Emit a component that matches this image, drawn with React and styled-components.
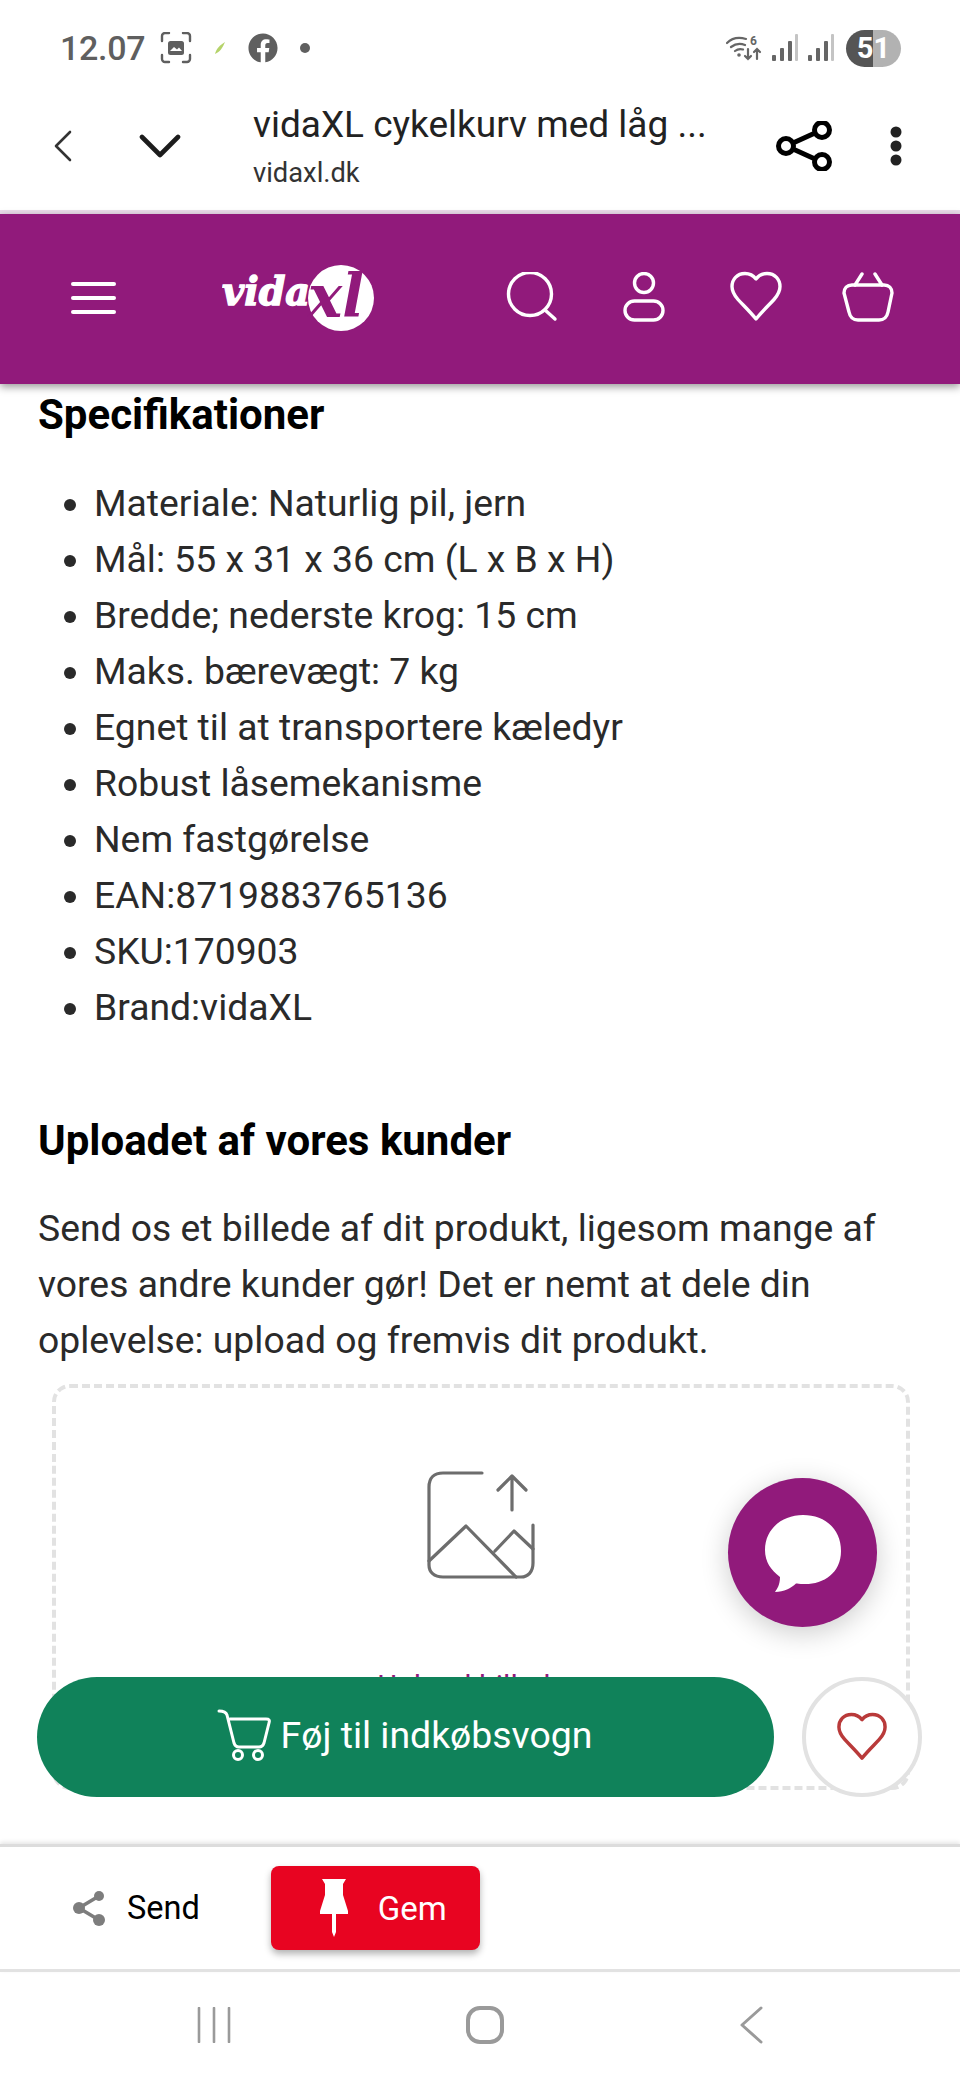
import React from 'react';
import styled, { createGlobalStyle } from 'styled-components';
import { FaFacebook } from 'react-icons/fa';

const specs = [
  'Materiale: Naturlig pil, jern',
  'Mål: 55 x 31 x 36 cm (L x B x H)',
  'Bredde; nederste krog: 15 cm',
  'Maks. bærevægt: 7 kg',
  'Egnet til at transportere kæledyr',
  'Robust låsemekanisme',
  'Nem fastgørelse',
  'EAN:8719883765136',
  'SKU:170903',
  'Brand:vidaXL',
];

const Global = createGlobalStyle`
  html, body { margin: 0; padding: 0; background: #fff; }
  body { font-family: Roboto, "Liberation Sans", sans-serif; }
  * { box-sizing: border-box; }
`;

const Page = styled.div`
  width: 960px;
  height: 2080px;
  display: flex;
  flex-direction: column;
  overflow: hidden;
  background: #fff;
`;

/* status bar */
const StatusBar = styled.div`
  height: 72px;
  flex: none;
  display: flex;
  align-items: center;
  padding: 24px 59px 0 60px;
  color: #5f5f5f;
`;
const Clock = styled.span`
  font-size: 34px;
  font-weight: 500;
  width: 100px;
  letter-spacing: -0.3px;
`;
const StatusLeft = styled.div`
  display: flex;
  align-items: center;
  gap: 22px;
`;
const StatusRight = styled.div`
  margin-left: auto;
  display: flex;
  align-items: center;
  gap: 10px;
`;
const Battery = styled.div`
  width: 55px;
  height: 37px;
  margin-left: 2px;
  border-radius: 19px;
  background: linear-gradient(90deg, #555 0 49%, #b2b2b2 49% 100%);
  color: #fff;
  font-size: 29px;
  font-weight: 700;
  line-height: 37px;
  text-align: center;
`;

/* browser bar */
const BrowserBar = styled.div`
  height: 142px;
  flex: none;
  display: flex;
  align-items: center;
  padding: 0 58px 0 54px;
  border-bottom: 4px solid #eadcea;
`;
const NavChevrons = styled.div`
  display: flex;
  align-items: center;
  gap: 67px;
  width: 199px;
  margin-top: 10px;
`;
const TitleBlock = styled.div`
  flex: 1;
  margin-top: 12px;
`;
const PageTitle = styled.div`
  font-size: 37px;
  line-height: 44px;
  color: #222;
`;
const PageUrl = styled.div`
  font-size: 27.300px;
  line-height: 36px;
  margin-top: 8px;
  color: #333;
`;
const BarActions = styled.div`
  display: flex;
  align-items: center;
  gap: 58px;
  margin-top: 10px;
`;

/* shop header */
const Header = styled.header`
  height: 170px;
  flex: none;
  position: relative;
  z-index: 2;
  display: flex;
  align-items: center;
  padding: 0 66px 0 71px;
  background: #911a7b;
  box-shadow: 0 3px 8px rgba(0, 0, 0, 0.4);
`;
const Burger = styled.div`
  width: 45px;
  display: flex;
  flex-direction: column;
  gap: 10px;
  margin-top: -3px;
`;
const BurgerLine = styled.span`
  display: block;
  height: 4px;
  border-radius: 2px;
  background: #fff;
`;
const LogoBox = styled.div`
  margin-left: 106px;
  margin-top: -4px;
  line-height: 0;
`;
const HeaderIcons = styled.div`
  margin-left: auto;
  display: flex;
  align-items: center;
  gap: 60px;
  margin-top: -4px;
`;

/* page content */
const Content = styled.main`
  flex: 1;
  position: relative;
  overflow: hidden;
  padding: 9px 38px 0;
`;
const Heading = styled.h2`
  margin: ${(p) => p.$top || 0}px 0 0;
  font-size: 42px;
  line-height: 44px;
  font-weight: 700;
  color: #000;
`;
const SpecList = styled.ul`
  margin: 38px 0 0;
  padding: 0 0 0 56px;
`;
const SpecItem = styled.li`
  font-size: 37.300px;
  line-height: 56px;
  color: #2a2a2a;
`;
const Intro = styled.p`
  margin: 37px 0 0;
  font-size: 37.300px;
  line-height: 56px;
  color: #2a2a2a;
  white-space: nowrap;
`;
const DropZone = styled.div`
  height: 406px;
  margin: 16px 12px 0 14px;
  padding-top: 83px;
  display: flex;
  flex-direction: column;
  align-items: center;
  border: 4px dashed #e2e2e2;
  border-radius: 18px;
`;
const DropLabel = styled.div`
  margin-top: 90px;
  margin-right: 18px;
  font-size: 30px;
  line-height: 34px;
  color: #911a7b;
`;
const ChatBubble = styled.div`
  position: absolute;
  right: 83px;
  bottom: 217px;
  width: 149px;
  height: 149px;
  display: flex;
  align-items: center;
  justify-content: center;
  border-radius: 50%;
  background: #911a7b;
  box-shadow: 0 6px 28px rgba(0, 0, 0, 0.2);
`;
const BuyBar = styled.div`
  position: absolute;
  left: 37px;
  right: 38px;
  bottom: 47px;
  display: flex;
  align-items: center;
  justify-content: space-between;
`;
const AddButton = styled.div`
  width: 737px;
  height: 120px;
  display: flex;
  align-items: center;
  justify-content: center;
  gap: 10px;
  padding: 0 2px 4px 0;
  border-radius: 60px;
  background: #10825a;
  color: #fff;
  font-size: 37.400px;
`;
const WishButton = styled.div`
  width: 120px;
  height: 120px;
  display: flex;
  align-items: center;
  justify-content: center;
  border-radius: 50%;
  background: #fff;
  border: 4px solid #e2e2e2;
`;

/* pinterest bar */
const ShareBar = styled.div`
  height: 128px;
  flex: none;
  position: relative;
  display: flex;
  align-items: center;
  padding: 0 0 0 72px;
  background: #fff;
  border-top: 3px solid #dcdcdc;
  border-bottom: 3px solid #e2e2e2;
  box-shadow: 0 -2px 4px rgba(0, 0, 0, 0.1);
`;
const SendLink = styled.div`
  display: flex;
  align-items: center;
  gap: 21px;
  font-size: 32.500px;
  color: #000;
`;
const PinButton = styled.div`
  width: 209px;
  height: 84px;
  margin-left: 71px;
  display: flex;
  align-items: center;
  padding-left: 49px;
  gap: 30px;
  border-radius: 8px;
  background: #e80421;
  color: #fff;
  font-size: 33px;
  box-shadow: 0 4px 7px rgba(0, 0, 0, 0.3);
`;

/* android nav */
const SystemNav = styled.nav`
  height: 110px;
  flex: none;
  display: flex;
  align-items: center;
  padding: 0 197px 0 197px;
  justify-content: space-between;
  margin-top: -2px;
`;

function ScreenshotIcon() {
  return (
    <svg width="32" height="32" viewBox="0 0 32 32" fill="none" stroke="#5f5f5f" strokeWidth="2.4" strokeLinecap="round">
      <path d="M2 9V4a3 3 0 0 1 3-3h4M23 1h4a3 3 0 0 1 3 3v5M30 23v4a3 3 0 0 1-3 3h-4M9 30H5a3 3 0 0 1-3-3v-4" />
      <rect x="8" y="9" width="16" height="14" rx="2.5" fill="#5f5f5f" stroke="none" />
      <path d="M10 19l4-4 3 2.5 2-2 3 3.5z" fill="#fff" stroke="none" />
    </svg>
  );
}

function LeafIcon() {
  return (
    <svg width="12" height="14" viewBox="0 0 12 14">
      <path d="M1 13C2 8 6 4 11 1 9 6 6 11 1 13z" fill="#b5d36a" />
    </svg>
  );
}

function WifiIcon() {
  return (
    <svg width="36" height="26" viewBox="0 0 36 26" fill="none" stroke="#666" strokeWidth="2.2" strokeLinecap="round">
      <path d="M1 8C6 3 13 2 20 4M5 12c4-3 9-4 14-2M9 16c2.500-2 5-2.500 8-1.500" />
      <circle cx="13" cy="20" r="1.800" fill="#666" stroke="none" />
      <path d="M22 14v10M19 21l3 3 3-3M31 24V14M28 17l3-3 3 3" />
      <text x="24" y="10" fontSize="12" fontWeight="700" fill="#666" stroke="none" fontFamily="Roboto, sans-serif">6</text>
    </svg>
  );
}

function SignalIcon() {
  return (
    <svg width="26" height="28" viewBox="0 0 26 28">
      <rect x="0" y="21" width="4" height="6" rx="1" fill="#666" />
      <rect x="8" y="14" width="4" height="13" rx="1" fill="#666" />
      <rect x="16" y="7" width="4" height="20" rx="1" fill="#666" />
      <rect x="23" y="0" width="3" height="27" rx="1" fill="#c4c4c4" />
    </svg>
  );
}

function BackThin() {
  return (
    <svg width="18" height="32" viewBox="0 0 18 32" fill="none" stroke="#333" strokeWidth="2.6" strokeLinecap="round" strokeLinejoin="round">
      <path d="M16 2L2 16l14 14" />
    </svg>
  );
}

function DownChevron() {
  return (
    <svg width="42" height="24" viewBox="0 0 42 24" fill="none" stroke="#1c1c1c" strokeWidth="4.600" strokeLinecap="round" strokeLinejoin="round">
      <path d="M3 3l18 18L39 3" />
    </svg>
  );
}

function ShareOutline() {
  return (
    <svg width="56" height="50" viewBox="0 0 56 50" fill="none" stroke="#000" strokeWidth="5">
      <circle cx="10" cy="25" r="7.500" />
      <circle cx="46" cy="9" r="7.500" />
      <circle cx="46" cy="41" r="7.500" />
      <path d="M17 22l22-10M17 28l22 10" />
    </svg>
  );
}

function DotsIcon() {
  return (
    <svg width="12" height="40" viewBox="0 0 12 40" fill="#222">
      <circle cx="6" cy="6" r="5.500" />
      <circle cx="6" cy="20" r="5.500" />
      <circle cx="6" cy="34" r="5.500" />
    </svg>
  );
}

function VidaLogo() {
  return (
    <svg width="152" height="72" viewBox="0 0 152 72">
      <circle cx="119" cy="37" r="33" fill="#fff" />
      <text x="0" y="44" fontFamily="'DejaVu Serif', serif" fontStyle="italic" fontWeight="700" fontSize="40" fill="#fff" stroke="#fff" strokeWidth="1.4" textLength="88" lengthAdjust="spacingAndGlyphs">vida</text>
      <text x="86" y="56" fontFamily="'DejaVu Serif', serif" fontStyle="italic" fontWeight="700" fontSize="60" fill="#911a7b" textLength="56" lengthAdjust="spacingAndGlyphs">xl</text>
    </svg>
  );
}

function SearchIcon() {
  return (
    <svg width="52" height="50" viewBox="0 0 52 50" fill="none" stroke="#fff" strokeWidth="3.400" strokeLinecap="round">
      <circle cx="24" cy="22" r="21.500" />
      <path d="M39 38l10 9" />
    </svg>
  );
}

function UserIcon() {
  return (
    <svg width="52" height="50" viewBox="0 0 52 50" fill="none" stroke="#fff" strokeWidth="3.400">
      <circle cx="26" cy="11" r="9.500" />
      <rect x="7" y="29" width="38" height="19" rx="9.500" />
    </svg>
  );
}

function HeartIcon({ size = 52, color = '#fff', weight = 3.4 }) {
  return (
    <svg width={size} height={size} viewBox="0 0 52 50" fill="none" stroke={color} strokeWidth={weight} strokeLinejoin="round">
      <path d="M26 7c-3-4-7-5.500-11-5.500C7 1.500 2 7.500 2 14.500c0 5 2.500 9 6 13 5 5.500 11 11 18 19.500 7-8.500 13-14 18-19.500 3.500-4 6-8 6-13 0-7-5-13-13-13-4 0-8 1.500-11 5.500z" />
    </svg>
  );
}

function BasketIcon() {
  return (
    <svg width="52" height="50" viewBox="0 0 52 50" fill="none" stroke="#fff" strokeWidth="3.400" strokeLinecap="round" strokeLinejoin="round">
      <path d="M20 2l-7 11M33 2l7 11" />
      <path d="M10 13h32c5 0 8 3 8 8l-4 19c-1 5-4 8-9 8H16c-5 0-8-3-9-8L2 21c0-5 3-8 8-8z" />
    </svg>
  );
}

function UploadIcon() {
  return (
    <svg width="108" height="108" viewBox="0 0 108 108" fill="none" stroke="#6d6d6d" strokeWidth="3.200" strokeLinecap="round" strokeLinejoin="round">
      <path d="M55 2H16C7 2 2 7 2 16v78c0 7 5 12 14 12h78c7 0 12-5 12-14V54" />
      <path d="M2 90l37-35 50 51M68 80l19-20 19 18" />
      <path d="M85 39V6M71 19L85 5l14 14" />
    </svg>
  );
}

function ChatIcon() {
  return (
    <svg width="78" height="78" viewBox="0 0 78 78">
      <path d="M39 1c21 0 38 13 38 36S58 71 39 70c-3 0-6-.5-7-.5C27 74 20 78 11 78c2-3 5-7 5-15C7 56 1 48 1 36 1 15 18 1 39 1z" fill="#fff" />
    </svg>
  );
}

function CartIcon() {
  return (
    <svg width="54" height="52" viewBox="0 0 54 52" fill="none" stroke="#fff" strokeWidth="3" strokeLinecap="round" strokeLinejoin="round">
      <path d="M2 2c4 0 7 1 8 4l7 28c1 3 2 4 5 4h20c3 0 4-1 5-4l5-20c1-3 0-4-3-4H13" />
      <circle cx="21" cy="46" r="4.500" />
      <circle cx="41" cy="46" r="4.500" />
    </svg>
  );
}

function ShareFilled() {
  return (
    <svg width="34" height="38" viewBox="0 0 34 38" fill="#7d7d7d" stroke="#7d7d7d" strokeWidth="3.600">
      <path d="M27 7L7 19l20 12" fill="none" />
      <circle cx="27" cy="7" r="5" stroke="none" />
      <circle cx="7" cy="19" r="6" stroke="none" />
      <circle cx="27" cy="31" r="6" stroke="none" />
    </svg>
  );
}

function PinIcon() {
  return (
    <svg width="28" height="58" viewBox="0 0 28 58" fill="#fff">
      <path d="M2 0h24l-3 5v11l5 16v3H16v18l-2 5-2-5V35H0v-3l5-16V5z" />
    </svg>
  );
}

function RecentsIcon() {
  return (
    <svg width="34" height="36" viewBox="0 0 34 36" stroke="#9a9a9a" strokeWidth="2.600" strokeLinecap="round">
      <path d="M2 1v34M17 1v34M32 1v34" />
    </svg>
  );
}

function HomeIcon() {
  return (
    <svg width="38" height="38" viewBox="0 0 38 38" fill="none" stroke="#9a9a9a" strokeWidth="4">
      <rect x="2" y="2" width="34" height="34" rx="12" />
    </svg>
  );
}

function NavBack() {
  return (
    <svg width="24" height="38" viewBox="0 0 24 38" fill="none" stroke="#9a9a9a" strokeWidth="3" strokeLinecap="round" strokeLinejoin="round">
      <path d="M22 2L3 19l19 17" />
    </svg>
  );
}

export default function App() {
  return (
    <Page>
      <Global />
      <StatusBar>
        <Clock>12.07</Clock>
        <StatusLeft>
          <ScreenshotIcon />
          <LeafIcon />
          <FaFacebook size={30} />
          <svg width="10" height="10" viewBox="0 0 10 10" fill="#5f5f5f">
            <circle cx="5" cy="5" r="5" />
          </svg>
        </StatusLeft>
        <StatusRight>
          <WifiIcon />
          <SignalIcon />
          <SignalIcon />
          <Battery>51</Battery>
        </StatusRight>
      </StatusBar>

      <BrowserBar>
        <NavChevrons>
          <BackThin />
          <DownChevron />
        </NavChevrons>
        <TitleBlock>
          <PageTitle>vidaXL cykelkurv med låg ...</PageTitle>
          <PageUrl>vidaxl.dk</PageUrl>
        </TitleBlock>
        <BarActions>
          <ShareOutline />
          <DotsIcon />
        </BarActions>
      </BrowserBar>

      <Header>
        <Burger>
          <BurgerLine />
          <BurgerLine />
          <BurgerLine />
        </Burger>
        <LogoBox>
          <VidaLogo />
        </LogoBox>
        <HeaderIcons>
          <SearchIcon />
          <UserIcon />
          <HeartIcon />
          <BasketIcon />
        </HeaderIcons>
      </Header>

      <Content>
        <Heading>Specifikationer</Heading>
        <SpecList>
          {specs.map((s) => (
            <SpecItem key={s}>{s}</SpecItem>
          ))}
        </SpecList>
        <Heading $top={84}>Uploadet af vores kunder</Heading>
        <Intro>
          Send os et billede af dit produkt, ligesom mange af
          <br />
          vores andre kunder gør! Det er nemt at dele din
          <br />
          oplevelse: upload og fremvis dit produkt.
        </Intro>
        <DropZone>
          <UploadIcon />
          <DropLabel>Upload billede</DropLabel>
        </DropZone>
        <ChatBubble>
          <ChatIcon />
        </ChatBubble>
        <BuyBar>
          <AddButton>
            <CartIcon />
            Føj til indkøbsvogn
          </AddButton>
          <WishButton>
            <HeartIcon size={50} color="#b93a3a" weight={3.6} />
          </WishButton>
        </BuyBar>
      </Content>

      <ShareBar>
        <SendLink>
          <ShareFilled />
          Send
        </SendLink>
        <PinButton>
          <PinIcon />
          Gem
        </PinButton>
      </ShareBar>

      <SystemNav>
        <RecentsIcon />
        <HomeIcon />
        <NavBack />
      </SystemNav>
    </Page>
  );
}
